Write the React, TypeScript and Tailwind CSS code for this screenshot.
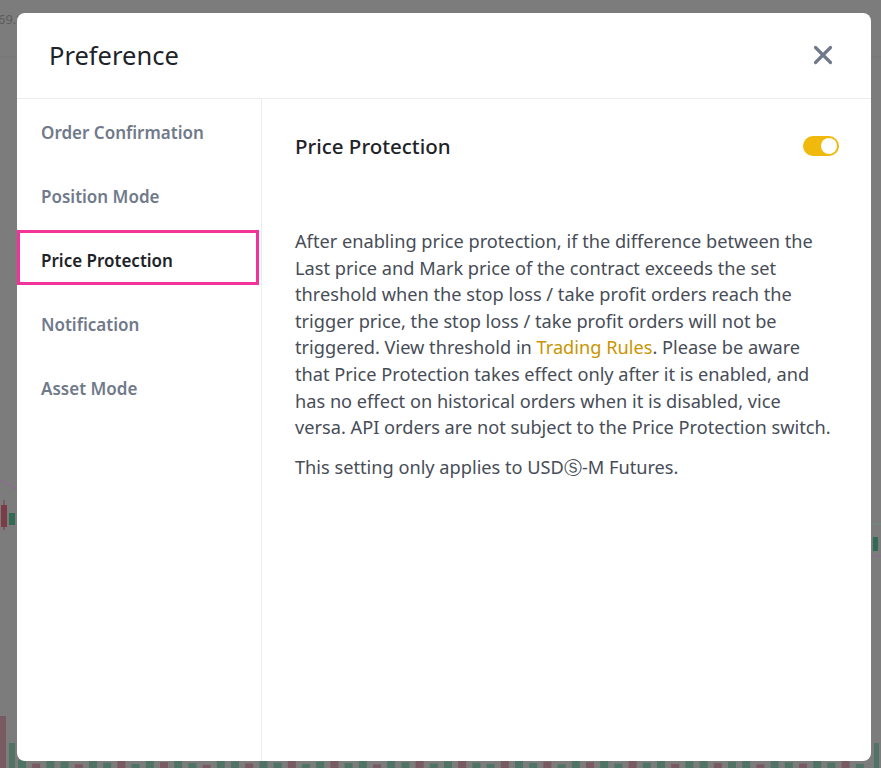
import { ReactNode } from 'react';

const menuItems = ['Order Confirmation', 'Position Mode', 'Price Protection', 'Notification', 'Asset Mode'];

const volume = [
  18, 10, 22, 14, 8, 20, 12, 16, 9, 24, 13, 19, 11, 7, 21, 15, 10, 17, 12, 23, 9, 14, 18, 11, 20, 8, 16, 13, 22, 10,
  15, 19, 12, 9, 17, 21, 11, 14, 8, 18, 13, 20, 10, 16, 12, 22, 9, 15, 19, 11, 14, 17, 8, 21, 13, 10, 18, 12, 16, 9,
];

// dimmed trading chart behind the dialog
const ChartBackdrop = () => (
  <svg className="absolute inset-0" width="881" height="768" viewBox="0 0 881 768">
    <text x="-2" y="24" fontSize="13" fill="#5c5c5c" fontFamily="Noto Sans, sans-serif">
      69.8
    </text>
    <line x1="0" y1="57" x2="881" y2="57" stroke="#767676" />
    <path d="M0 480 C 8 484, 14 488, 18 490" stroke="#8a6d8d" strokeWidth="1.5" fill="none" />
    <rect x="1" y="505" width="6" height="22" fill="#7a3d47" />
    <line x1="4" y1="500" x2="4" y2="530" stroke="#7a3d47" />
    <rect x="9" y="513" width="6" height="12" fill="#2f6b55" />
    <rect x="0" y="716" width="6" height="52" fill="#7a5a62" />
    <rect x="9" y="743" width="6" height="25" fill="#4f7466" />
    <line x1="871" y1="524" x2="881" y2="524" stroke="#6f8f85" />
    <rect x="873" y="537" width="5" height="14" fill="#2f6b55" />
    <line x1="871" y1="556" x2="881" y2="556" stroke="#8a6d8d" />
    <rect x="874" y="743" width="5" height="25" fill="#4f7466" />
    {volume.map((h, i) => (
      <rect
        key={i}
        x={18 + i * 14.2}
        y={768 - h * 0.45}
        width="8"
        height={h * 0.45}
        fill={i % 3 === 1 ? '#7a5a62' : '#4f7466'}
      />
    ))}
  </svg>
);

const Toggle = () => (
  <div className="flex h-[20px] w-[36px] items-center justify-end rounded-full bg-[#f0b90b] px-[2px]">
    <div className="h-[16px] w-[16px] rounded-full bg-white" />
  </div>
);

const Link = ({ children }: { children: ReactNode }) => (
  <span className="text-[#c99400]">{children}</span>
);

export default function App() {
  return (
    <div
      className="relative h-[768px] w-[881px] overflow-hidden bg-[#7c7c7c]"
      style={{ fontFamily: '"Noto Sans", sans-serif' }}
    >
      <ChartBackdrop />

      {/* Dialog */}
      <div className="absolute left-[17px] top-[13px] flex h-[748px] w-[854px] flex-col rounded-lg bg-white">
        <div className="flex h-[86px] shrink-0 items-center justify-between border-b border-[#eaecef] pl-8 pr-[38px]">
          <h1 className="text-[25.5px] font-normal text-[#1e2329]">Preference</h1>
          <svg width="20" height="20" viewBox="0 0 20 20" className="mb-[2px]">
            <path d="M2.5 2.5 L17.5 17.5 M17.5 2.5 L2.5 17.5" stroke="#707a8a" strokeWidth="3.2" strokeLinecap="round" />
          </svg>
        </div>

        <div className="flex min-h-0 flex-1">
          {/* Sidebar */}
          <nav className="flex w-[245px] shrink-0 flex-col gap-2 border-r border-[#eaecef] pt-[6px]">
            {menuItems.map((item) => {
              const active = item === 'Price Protection';
              return (
                <div
                  key={item}
                  className={`relative flex h-[56px] items-center pl-6 text-[17px] font-semibold ${
                    active ? 'text-[#1e2329]' : 'text-[#707a8a]'
                  }`}
                >
                  {item}
                  {active && (
                    <div className="absolute left-0 right-[2px] top-[-3px] h-[55px] border-[3px] border-[#f2339a]" />
                  )}
                </div>
              );
            })}
          </nav>

          {/* Content */}
          <section className="flex-1 pl-[33px] pr-[32px] pt-[32px]">
            <div className="flex h-[30px] items-center justify-between">
              <h2 className="text-[20.5px] font-medium text-[#1e2329]">Price Protection</h2>
              <Toggle />
            </div>
            <div className="mt-[67px] pr-[6px] text-[18.2px] leading-[26.6px] text-[#474d57]">
              <p>
                After enabling price protection, if the difference between the Last price and Mark price of the
                contract exceeds the set threshold when the stop loss / take profit orders reach the trigger price, the
                stop loss / take profit orders will not be triggered. View threshold in <Link>Trading Rules</Link>.
                Please be aware that Price Protection takes effect only after it is enabled, and has no effect on
                historical orders when it is disabled, vice versa. API orders are not subject to the Price Protection
                switch.
              </p>
              <p className="mt-[13px]">This setting only applies to USDⓈ-M Futures.</p>
            </div>
          </section>
        </div>
      </div>
    </div>
  );
}
